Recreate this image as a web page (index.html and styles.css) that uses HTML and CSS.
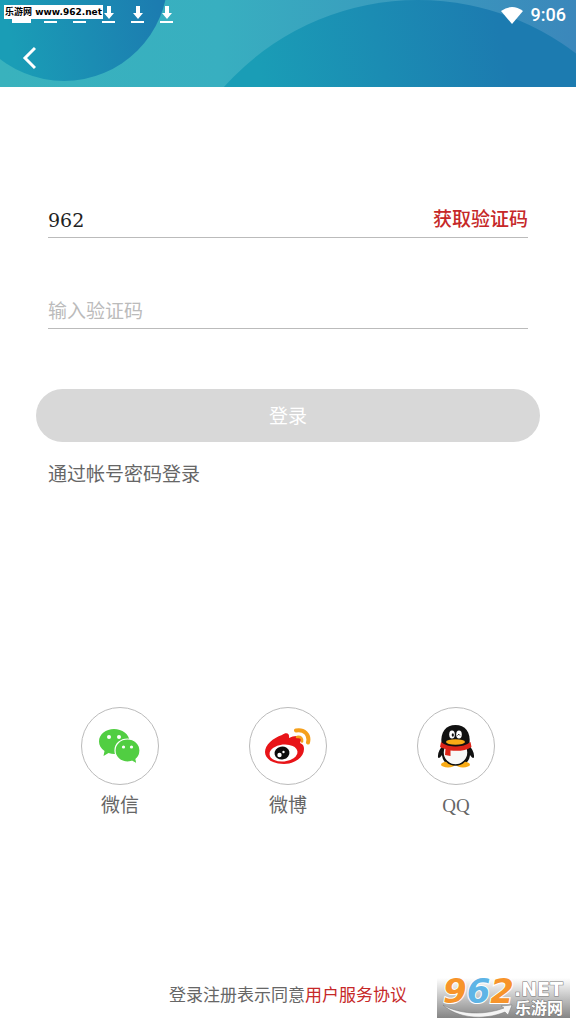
FILE: index.html
```
<!DOCTYPE html>
<html lang="zh-CN">
  <head>
    <meta charset="UTF-8">
    <meta name="viewport" content="width=device-width, initial-scale=1.0">
    <title>登录</title>
    <link rel="stylesheet" href="styles.css">
  </head>
  <body>
    <header class="header">
      <svg class="header-bg" viewBox="0 0 576 87" preserveAspectRatio="none" aria-hidden="true">
        <defs>
          <linearGradient id="base" x1="0" x2="1">
            <stop offset="0" stop-color="#39b2bd"/>
            <stop offset=".38" stop-color="#38afc0"/>
            <stop offset="1" stop-color="#3b87bb"/>
          </linearGradient>
          <linearGradient id="left" gradientUnits="userSpaceOnUse" x1="10" y1="40" x2="160" y2="10">
            <stop offset="0" stop-color="#1a9db6"/>
            <stop offset="1" stop-color="#1c7cb0"/>
          </linearGradient>
          <linearGradient id="right" gradientUnits="userSpaceOnUse" x1="260" y1="80" x2="500" y2="30">
            <stop offset="0" stop-color="#1a9db6"/>
            <stop offset="1" stop-color="#1c7bb0"/>
          </linearGradient>
        </defs>
        <rect width="576" height="87" fill="url(#base)"/>
        <circle cx="64" cy="-23" r="104" fill="url(#left)"/>
        <circle cx="418" cy="260" r="260" fill="url(#right)"/>
      </svg>
      <div class="status">
        <svg class="downloads" width="174" height="24" viewBox="0 0 174 24" fill="#fff" aria-hidden="true">
          <path d="M12 10h19v13H12z"/>
          <path d="M44 21h13v2H44zM73 21h13v2H73zM102 21h13v2h-13zM131 21h13v2h-13zM160 21h13v2h-13z"/>
          <path d="M107 6h4v7h3l-5 6-5-6h3zM136 6h4v7h3l-5 6-5-6h3zM165 6h4v7h3l-5 6-5-6h3z"/>
        </svg>
        <svg class="wifi" width="22" height="17" viewBox="0 0 22 17" aria-hidden="true">
          <path d="M0 4Q11-4 22 4L11 17z" fill="#fff"/>
        </svg>
        <span class="time">9:06</span>
      </div>
      <span class="site-tag">乐游网 www.962.net</span>
      <button class="back" aria-label="返回">
        <svg width="14" height="24" viewBox="0 0 14 24" aria-hidden="true">
          <path d="M13 2L3 12l10 10" fill="none" stroke="#fff" stroke-width="3"/>
        </svg>
      </button>
    </header>

    <main class="main">
      <form class="form">
        <div class="field">
          <input class="input" type="tel" value="962" aria-label="手机号">
          <button class="get-code" type="button">获取验证码</button>
        </div>
        <div class="field">
          <input class="input" type="text" placeholder="输入验证码" aria-label="验证码">
        </div>
        <button class="login" type="submit">登录</button>
        <a class="by-password" href="#">通过帐号密码登录</a>
      </form>

      <div class="social">
        <a class="social-item" href="#">
          <span class="circle">
            <svg width="42" height="36" viewBox="0 0 42 36" aria-hidden="true">
              <path d="M15 1C7 1 0 6 0 13.500c0 4 2 7 5.500 9.500L4.500 28l5-3c2 .7 4 1 6 1 8 0 15-5 15-12.500S23 1 15 1z" fill="#51ce42"/>
              <path d="M28.500 11C21.500 11 16 16 16 22.500S21.500 34 28.500 34c1.600 0 3-.3 4.400-.8L38 36l-1-4.800c2.600-2 4-5 4-8.700C41 16 35.500 11 28.500 11z" fill="#51ce42" stroke="#fff" stroke-width="1.200"/>
              <g fill="#fff">
                <circle cx="10" cy="9" r="2"/>
                <circle cx="20" cy="9" r="2"/>
                <circle cx="24.500" cy="19" r="1.600"/>
                <circle cx="32.500" cy="19" r="1.600"/>
              </g>
            </svg>
          </span>
          <span class="name">微信</span>
        </a>
        <a class="social-item" href="#">
          <span class="circle">
            <svg width="46" height="38" viewBox="0 0 46 38" aria-hidden="true">
              <path d="M17 8c4-3 8-2 7 3 4-2 8-3 11-1 2 1 1 4 0 6 3 1 4 3 4 6 0 8-9 15-20 15C8 37 0 32 0 25 0 18 8 11 17 8z" fill="#e81418"/>
              <ellipse cx="18.500" cy="26" rx="14" ry="8.500" transform="rotate(-6 18.500 26)" fill="#fff"/>
              <ellipse cx="17" cy="26" rx="7.500" ry="6.500" transform="rotate(-12 17 26)" fill="#0b0b0b"/>
              <circle cx="14.500" cy="28" r="2.200" fill="#fff"/>
              <circle cx="18.500" cy="25" r="1.200" fill="#fff"/>
              <path d="M31 3.500c8-1.500 14 4 12 12" fill="none" stroke="#f5a01c" stroke-width="4" stroke-linecap="round"/>
              <path d="M32 10c4-.5 5.500 1.500 5 4.500" fill="none" stroke="#f5a01c" stroke-width="2.600" stroke-linecap="round"/>
            </svg>
          </span>
          <span class="name">微博</span>
        </a>
        <a class="social-item" href="#">
          <span class="circle">
            <svg width="38" height="44" viewBox="0 0 38 44" aria-hidden="true">
              <path d="M7 20c-4 4-6.500 9-6 13 .3 2 2 1 4-2 1 9 7 10 14 10s13-1 14-10c2 3 3.700 4 4 2 .5-4-2-9-6-13z" fill="#111"/>
              <ellipse cx="11" cy="40.500" rx="7" ry="3" fill="#f9ab16"/>
              <ellipse cx="26" cy="40.500" rx="7" ry="3" fill="#f9ab16"/>
              <ellipse cx="18.500" cy="28.500" rx="12.500" ry="12.500" fill="#f8f8f8" stroke="#111" stroke-width="1.500"/>
              <path d="M4.500 20C3 8 9 1 18.500 1S34 8 32.500 20c-3 4-25 4-28 0z" fill="#111"/>
              <ellipse cx="15" cy="10.500" rx="2.800" ry="4" fill="#fff"/>
              <ellipse cx="22" cy="10.500" rx="2.800" ry="4" fill="#fff"/>
              <ellipse cx="15.800" cy="11" rx="1.100" ry="1.700" fill="#111"/>
              <path d="M20.500 11.500q1.300-2.500 2.500 0" fill="none" stroke="#111"/>
              <ellipse cx="18.500" cy="18" rx="9.500" ry="2.700" fill="#f9ab16"/>
              <path d="M4 18c7 6 22 6 29.500 0l1 5c-5 3.500-13 4.500-21 3.500V32L8 31l.5-6C6.500 24.500 5 24 3 23z" fill="#dc2418"/>
            </svg>
          </span>
          <span class="name">QQ</span>
        </a>
      </div>

      <p class="agreement">登录注册表示同意<a class="agreement-link" href="#">用户服务协议</a></p>
    </main>

    <!-- site logo in the corner -->
    <div class="watermark">
      <svg class="wm-logo" width="133" height="40" viewBox="0 0 133 40" role="img" aria-label="962.NET 乐游网">
        <path d="M6 27C22 36 46 38 67 30l-3-2 11-1-4 10-3-3C46 43 20 40 6 27z" fill="#f4f4f4" stroke="#777" stroke-width=".5"/>
        <text class="wm-number" x="6" y="25"><tspan fill="#f7942a">9</tspan><tspan fill="#5eb4e6">6</tspan><tspan fill="#f7942a">2</tspan></text>
        <text class="wm-net" x="77" y="18">.NET</text>
        <text class="wm-cn" x="78" y="36">乐游网</text>
      </svg>
    </div>
  </body>
</html>
```
FILE: styles.css
```
* {
  box-sizing: border-box;
}
body {
  margin: 0;
  min-height: 100vh;
  display: flex;
  flex-direction: column;
  background-color: #fff;
  font-family: "Liberation Serif", "Noto Sans CJK SC", serif;
  font-size: 19px;
  line-height: 24px;
  color: #666;
}
a {
  color: inherit;
  text-decoration: none;
}
button {
  border: 0;
  padding: 0;
  background: transparent;
  font: inherit;
  cursor: pointer;
}
svg {
  display: block;
}

/* header */
.header {
  position: relative;
  height: 87px;
}
.header-bg {
  position: absolute;
  width: 100%;
  height: 100%;
}
.status {
  position: relative;
  height: 30px;
  display: flex;
  align-items: center;
  padding-right: 10px;
}
.downloads {
  align-self: flex-start;
}
.wifi {
  margin-left: auto;
}
.time {
  margin-left: 8px;
  font-family: Roboto, sans-serif;
  font-size: 18px;
  font-weight: 500;
  color: #fff;
}
.site-tag {
  position: absolute;
  top: 5px;
  left: 4px;
  height: 14px;
  padding: 0 1px;
  background-color: #fff;
  color: #000;
  font-family: "DejaVu Sans", "Noto Sans CJK SC", sans-serif;
  font-size: 9px;
  font-weight: bold;
  line-height: 14px;
  white-space: nowrap;
}
.back {
  position: relative;
  margin: 16px 0 0 22px;
}

/* login form */
.main {
  flex: 1;
  display: flex;
  flex-direction: column;
  padding: 113px 36px 16px;
}
.form {
  display: flex;
  flex-direction: column;
}
.field {
  display: flex;
  align-items: center;
  height: 38px;
  margin: 0 12px 53px;
  border-bottom: 1px solid #bbb;
}
.input {
  flex: 1;
  min-width: 0;
  height: 37px;
  border: 0;
  padding: 2px 0 0;
  outline: 0;
  background: transparent;
  font-family: "DejaVu Serif", "Noto Sans CJK SC", serif;
  font-size: 19px;
  color: #222;
}
.input::placeholder {
  color: #bbb;
  opacity: 1;
}
.get-code {
  padding-top: 3px;
  color: #c62828;
  font-weight: 500;
}
.login {
  height: 53px;
  margin-top: 7px;
  padding-top: 2px;
  border-radius: 27px;
  background-color: #d8d8d8;
  color: #fff;
}
.by-password {
  align-self: flex-start;
  margin: 21px 12px 0;
}

/* third party login */
.social {
  display: flex;
  margin-top: 220px;
}
.social-item {
  flex: 1;
  display: flex;
  flex-direction: column;
  align-items: center;
  gap: 9px;
}
.circle {
  width: 78px;
  height: 78px;
  display: flex;
  align-items: center;
  justify-content: center;
  border: 1px solid #bbb;
  border-radius: 50%;
}

.agreement {
  margin: auto 0 0;
  text-align: center;
  font-size: 17px;
}
.agreement-link {
  color: #c62828;
}

/* corner logo */
.watermark {
  position: absolute;
  right: 6px;
  bottom: 6px;
  background: linear-gradient(#fff, #858585);
}
.wm-logo {
  overflow: visible;
}
.wm-logo text {
  paint-order: stroke;
}
.wm-number {
  font: italic bold 34px "DejaVu Sans", sans-serif;
  stroke: #fff;
  stroke-width: 2px;
}
.wm-net,
.wm-cn {
  fill: #fff;
  stroke: #777;
  stroke-width: 1px;
}
.wm-net {
  font: bold 19px "DejaVu Sans", sans-serif;
}
.wm-cn {
  font: bold 16px "Liberation Sans", "Noto Sans CJK SC", sans-serif;
}
```
